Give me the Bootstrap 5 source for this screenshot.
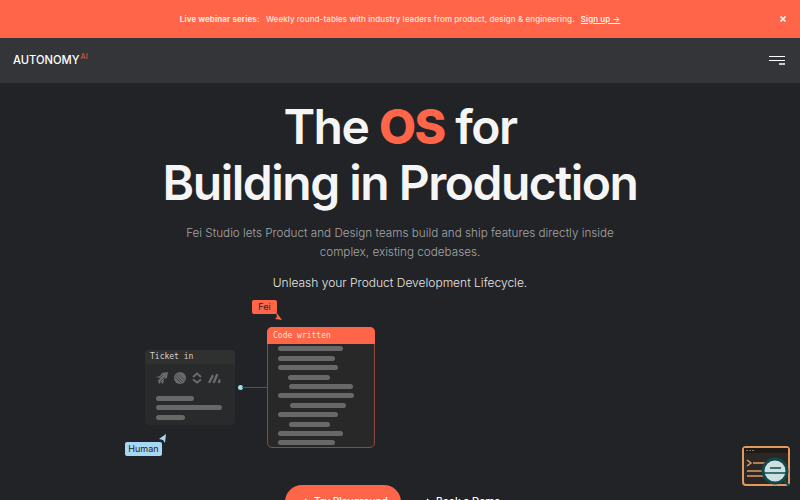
<!DOCTYPE html>
<html lang="en">
<head>
    <meta charset="UTF-8">
    <meta name="viewport" content="width=device-width, initial-scale=1.0">
    <title>Autonomy AI</title>
    <link href="https://cdn.jsdelivr.net/npm/bootstrap@5.3.0/dist/css/bootstrap.min.css" rel="stylesheet">
    <style>
        html, body {
            height: 500px;
            overflow: hidden;
        }

        body {
            font-family: "Inter", "Liberation Sans", sans-serif;
            background-color: #222326;
            color: #f5f5f5;
        }

        .promo-bar {
            height: 38px;
            padding-bottom: 1px;
            background-color: #fe6549;
            color: #fde4de;
            font-size: 8px;
            letter-spacing: .09px;
            font-weight: 500;
        }

        .promo-bar a {
            color: #fff;
            margin-left: 4px;
        }

        .promo-bar strong {
            font-weight: 700;
            margin-right: 4px;
        }

        .promo-close {
            right: 9px;
            top: 11px;
            background: none;
            border: 0;
            padding: 0;
            line-height: 0;
        }

        .top-nav {
            height: 45px;
            background-color: #333539;
            padding: 0 15px 0 13px;
        }

        .brand-name {
            font-size: 11.2px;
            font-weight: 500;
            color: #fff;
            text-decoration: none;
            display: flex;
            align-items: flex-start;
        }

        .brand-name sup {
            color: #c9533e;
            font-size: 7px;
            font-weight: 600;
            top: 0;
            line-height: 1;
            margin-top: 1px;
            margin-left: 1px;
        }

        .menu-btn {
            width: 16px;
            background: none;
            border: 0;
            padding: 0;
        }

        .menu-btn span {
            display: block;
            height: 1px;
            background: #fff;
            margin-bottom: 2.5px;
        }

        .menu-btn span:last-child {
            width: 6px;
            height: 2px;
            margin: 0 0 0 auto;
            background: #ccc;
        }

        .hero-title {
            font-size: 48px;
            line-height: 56px;
            font-weight: 600;
            letter-spacing: -1.5px;
            margin: 16px 0 0;
            color: #f5f5f5;
        }

        .hero-title span {
            color: #fe6549;
            font-weight: 800;
        }

        .hero-sub {
            font-size: 11.7px;
            line-height: 19px;
            font-weight: 300;
            color: #a4a5a7;
            margin: 13px 0 0;
        }

        .hero-tagline {
            font-size: 12px;
            line-height: 19px;
            font-weight: 300;
            color: #e6e6e6;
            margin: 11px 0 0;
        }

        .flow-canvas {
            position: relative;
            width: 800px;
            height: 193px;
        }

        .flow-node {
            position: absolute;
            font-family: "DejaVu Sans Mono", "Liberation Mono", monospace;
            font-size: 8px;
        }

        .node-ticket {
            left: 145px;
            top: 58px;
            width: 90px;
            height: 75px;
            background: #292a2b;
            border-radius: 4px;
            color: #d0d0d0;
        }

        .node-ticket .node-head {
            height: 14px;
            padding: 2px 5px;
            background: #2f3030;
            border-radius: 4px 4px 0 0;
            line-height: 10px;
        }

        .ticket-icons {
            padding: 8px 0 0 11px;
            gap: 6px;
            height: 28px;
        }

        .ticket-bars {
            padding-left: 11px;
        }

        .node-code {
            left: 267px;
            top: 35px;
            width: 108px;
            height: 121px;
            background: #282829;
            border: 1px solid #8a4a40;
            border-radius: 5px;
        }

        .node-code .node-head {
            height: 17px;
            margin: -1px -1px 0;
            padding: 3px 6px;
            background: #fe6549;
            border-radius: 5px 5px 0 0;
            color: #fde4de;
            line-height: 11px;
        }

        .code-bars {
            margin-top: -2px;
            padding-left: 10px;
        }

        .skeleton-bar {
            height: 5px;
            border-radius: 3px;
            background: #686868;
        }

        .ticket-bars .skeleton-bar {
            margin-top: 4.2px;
        }

        .code-bars .skeleton-bar {
            margin-top: 4.4px;
        }

        .flow-dot {
            position: absolute;
            left: 238px;
            top: 93px;
            width: 5px;
            height: 5px;
            border-radius: 50%;
            background: #9fe3ea;
        }

        .flow-line {
            position: absolute;
            left: 242px;
            top: 95px;
            width: 25px;
            height: 1px;
            background: #4f5557;
        }

        .flow-tag {
            position: absolute;
            font-size: 9px;
            line-height: 14px;
            height: 14px;
            text-align: center;
            border-radius: 2px;
            color: #232326;
            font-weight: 400;
        }

        .tag-human {
            left: 125px;
            top: 150px;
            width: 37px;
            background: #a6d8f5;
        }

        .tag-fei {
            left: 252px;
            top: 8px;
            width: 25px;
            background: #fe6549;
        }

        .flow-pointer {
            position: absolute;
        }

        .pointer-human {
            left: 159px;
            top: 142px;
        }

        .pointer-fei {
            left: 275px;
            top: 20px;
        }

        .cta-row {
            padding-left: 285px;
            gap: 20px;
            font-size: 10.2px;
            font-weight: 500;
            white-space: nowrap;
        }

        .cta-main {
            width: 116px;
            height: 34px;
            border-radius: 17px;
            background: #fe6549;
            color: #fff;
            border: 0;
            padding: 0 0 0 14px;
            gap: 5px;
            font-size: 10.2px;
            font-weight: 500;
        }

        .cta-link {
            height: 34px;
            gap: 5px;
            color: #fff;
            text-decoration: none;
        }

        .help-widget {
            position: absolute;
            left: 742px;
            top: 445px;
        }
    </style>
</head>
<body>
    <div class="promo-bar position-relative d-flex align-items-center justify-content-center">
        <span><strong>Live webinar series:</strong> Weekly round-tables with industry leaders from product, design &amp; engineering. <a href="#">Sign up →</a></span>
        <button class="promo-close position-absolute" aria-label="Close">
            <svg width="16" height="16" viewBox="0 0 16 16"><path d="M5.500 5.500l5 5m0-5l-5 5" stroke="#fff" stroke-width="1.600" fill="none"/></svg>
        </button>
    </div>

    <nav class="top-nav d-flex align-items-center justify-content-between">
        <a class="brand-name" href="#">AUTONOMY<sup>AI</sup></a>
        <button class="menu-btn" aria-label="Menu"><span></span><span></span><span></span></button>
    </nav>

    <main class="text-center">
        <h1 class="hero-title">The <span>OS</span> for<br>Building in Production</h1>
        <p class="hero-sub">Fei Studio lets Product and Design teams build and ship features directly inside<br>complex, existing codebases.</p>
        <p class="hero-tagline">Unleash your Product Development Lifecycle.</p>

        <div class="flow-canvas text-start">
            <div class="flow-tag tag-fei">Fei</div>
            <svg class="flow-pointer pointer-fei" width="8" height="9" viewBox="0 0 8 9"><path d="M1 0l6 8-7-1 2-2z" fill="#fe6549"/></svg>

            <div class="flow-node node-ticket">
                <div class="node-head">Ticket in</div>
                <div class="ticket-icons d-flex align-items-start">
                    <svg width="12" height="12" viewBox="0 0 12 12" fill="#6b6b6b"><path d="M0 5l4-1 2-3 6-1-1 6-3 1-1 5-2-2-2 2-1-3 2-3z"/><path d="M2 8l5-5M4 10l5-5" stroke="#2f2f2f" stroke-width=".7"/></svg>
                    <svg width="12" height="12" viewBox="0 0 12 12"><circle cx="6" cy="6" r="6" fill="#6b6b6b"/><path d="M2 3l7 7M4 1.500l7 7M1 5l6 6" stroke="#3a3a3a" stroke-width=".8"/></svg>
                    <svg width="10" height="12" viewBox="0 0 10 12" fill="none" stroke="#6b6b6b" stroke-width="2"><path d="M1 5l4-3.500 4 3.500M1 7.500l4 3 4-3"/></svg>
                    <svg width="13" height="12" viewBox="0 0 13 12" fill="none" stroke="#6b6b6b" stroke-width="2.400" stroke-linecap="round"><path d="M1.500 10l3-6M6 10l3-7M11 10l.5-1.500"/></svg>
                </div>
                <div class="ticket-bars" id="ticketBars"></div>
            </div>

            <div class="flow-dot"></div>
            <div class="flow-line"></div>

            <div class="flow-node node-code">
                <div class="node-head">Code written</div>
                <div class="code-bars" id="codeBars"></div>
            </div>

            <svg class="flow-pointer pointer-human" width="7" height="9" viewBox="0 0 7 9"><path d="M7 0L6 9 4 6 0 5z" fill="#a6d8f5"/></svg>
            <div class="flow-tag tag-human">Human</div>
        </div>

        <div class="cta-row d-flex align-items-start">
            <button class="cta-main d-flex align-items-center">
                <svg width="10" height="10" viewBox="0 0 10 10" fill="none" stroke="#fff" stroke-width="1.200"><path d="M1 5h8M6 2l3 3-3 3"/></svg>
                Try Playground
            </button>
            <a class="cta-link d-flex align-items-center" href="#">
                <svg width="10" height="10" viewBox="0 0 10 10" fill="none" stroke="#fff" stroke-width="1.200"><path d="M1 5h8M6 2l3 3-3 3"/></svg>
                Book a Demo
            </a>
        </div>
    </main>

    <svg class="help-widget" width="50" height="44" viewBox="0 0 50 44">
        <rect x="1" y="2" width="46" height="38" rx="3" fill="#2a2724" stroke="#e39a5f" stroke-width="2"/>
        <rect x="2" y="3" width="44" height="5" fill="#1f1a16"/>
        <path d="M4.500 5.500h1M7.500 5.500h1M10.500 5.500h1" stroke="#d9c9b5" stroke-width="1.200"/>
        <path d="M5 15l4 3-4 3" stroke="#e39a5f" stroke-width="1.500" fill="none"/>
        <path d="M11 18h14M5 26h20M5 31h20" stroke="#e39a5f" stroke-width="1.500"/>
        <circle cx="33" cy="26" r="12" fill="#cfe0e0" stroke="#12494f" stroke-width="3"/>
        <path d="M28 23h11M22 28h22" stroke="#12494f" stroke-width="1.500"/>
        <path d="M42 35l5 6" stroke="#12494f" stroke-width="2"/>
    </svg>

    <script>
        // bar widths read off the picture: [indent, width]
        const ticketBars = [[0, 38], [0, 66], [0, 29]];
        const codeBars = [[0, 65], [0, 57], [0, 60], [10, 42], [11, 64], [0, 76], [12, 56], [0, 60], [11, 41], [0, 65], [0, 57]];

        function renderBars(id, bars) {
            const box = document.getElementById(id);
            bars.forEach(bar => {
                const el = document.createElement('div');
                el.className = 'skeleton-bar';
                el.style.marginLeft = bar[0] + 'px';
                el.style.width = bar[1] + 'px';
                box.appendChild(el);
            });
        }

        renderBars('ticketBars', ticketBars);
        renderBars('codeBars', codeBars);
    </script>
    <script src="https://cdn.jsdelivr.net/npm/bootstrap@5.3.0/dist/js/bootstrap.bundle.min.js"></script>
</body>
</html>
